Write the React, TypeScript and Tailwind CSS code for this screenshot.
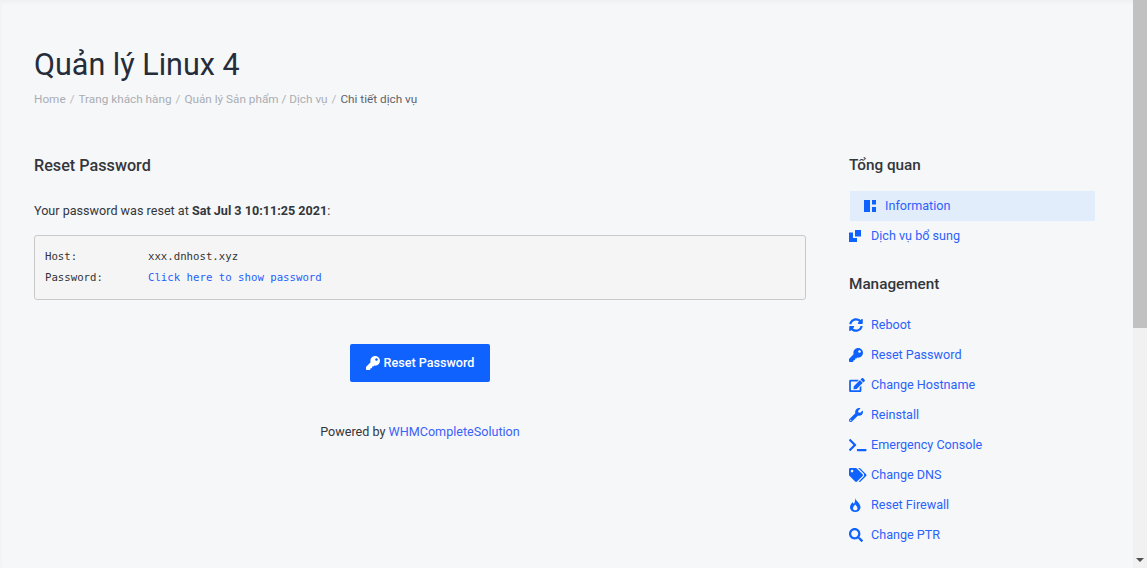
import { FaSyncAlt, FaKey, FaEdit, FaWrench, FaTerminal, FaTags, FaSearch } from 'react-icons/fa';

function FlameIcon({ className }: { className?: string }) {
  return (
    <svg viewBox="0 0 384 512" className={`fill-current ${className}`}>
      <path
        fillRule="evenodd"
        d="M192 0C200 90 300 130 350 230C375 280 384 310 384 340C384 440 300 512 192 512S0 440 0 340C0 260 60 200 100 150C110 200 130 215 150 200C190 150 190 60 192 0ZM192 240C130 310 110 350 110 380C110 420 145 448 192 448S274 420 274 380C274 350 254 310 192 240Z"
      />
    </svg>
  );
}

const MANAGEMENT = [
  { label: 'Reboot', icon: FaSyncAlt, size: 'w-[14px] h-[14px]' },
  { label: 'Reset Password', icon: FaKey, size: 'w-[14px] h-[14px]' },
  { label: 'Change Hostname', icon: FaEdit, size: 'w-[16px] h-[14px]' },
  { label: 'Reinstall', icon: FaWrench, size: 'w-[14px] h-[14px]' },
  { label: 'Emergency Console', icon: FaTerminal, size: 'w-[17.5px] h-[14px]' },
  { label: 'Change DNS', icon: FaTags, size: 'w-[17.5px] h-[14px]' },
  { label: 'Reset Firewall', icon: FlameIcon, size: 'w-[10.5px] h-[14px] ml-[1px]' },
  { label: 'Change PTR', icon: FaSearch, size: 'w-[14px] h-[14px]' },
];

const CRUMBS = ['Home', 'Trang khách hàng', 'Quản lý Sản phẩm / Dịch vụ'];

function InfoIcon() {
  return (
    <svg viewBox="0 0 12 12" className="w-[12px] h-[12px] fill-current">
      <path d="M0 0h6v12H0zM8 0h4v4.5H8zM8 7h4v5H8z" />
    </svg>
  );
}

function AddonIcon() {
  return (
    <svg viewBox="0 0 12 12" className="w-[12px] h-[12px] fill-current">
      <path d="M6 0h6v6.5H6zM0 2.5h4v5.5h4v4H0z" />
    </svg>
  );
}

export default function App() {
  return (
    <div className="flex h-[568px] overflow-hidden bg-[#f6f7f9] font-['Roboto',sans-serif] text-[12.6px] text-[#292b2f]">
      <main className="flex-1 min-w-0 pl-[34px] pr-[38px] pt-[43px] shadow-[inset_0_4px_4px_-2px_#eeeff1,inset_4px_0_4px_-3px_#f0f1f3]">
        <h1 className="text-[30.5px] leading-[44px] text-[#252c3a]">Quản lý Linux 4</h1>
        <nav className="flex items-center mt-[3px] h-[20px] text-[11.75px] text-[#a9adb3]">
          {CRUMBS.map((c) => (
            <span key={c} className="flex">
              {c}
              <span className="mx-[4px] text-[#b5b8bd]">/</span>
            </span>
          ))}
          <span className="text-[#5f6268]">Chi tiết dịch vụ</span>
        </nav>

        <div className="flex mt-[43px]">
          <section className="w-[772px] shrink-0">
            <h2 className="mt-[1px] text-[16.2px] leading-[24px] font-medium text-[#33363b]">Reset Password</h2>
            <p className="mt-[23px] leading-[20px] text-[#33363b]">
              Your password was reset at <b className="font-bold">Sat Jul 3 10:11:25 2021</b>:
            </p>
            <div className="mt-[14px] h-[65px] rounded-[3px] border border-[#c9c9c9] bg-[#f5f5f5] px-[10px] pt-[10px] font-['DejaVu_Sans_Mono',monospace] text-[10.7px] leading-[21px] text-[#333]">
              <div className="flex">
                <span className="w-[103px]">Host:</span>
                <span>xxx.dnhost.xyz</span>
              </div>
              <div className="flex">
                <span className="w-[103px]">Password:</span>
                <a className="text-[#1f5fff]">Click here to show password</a>
              </div>
            </div>
            <div className="flex justify-center mt-[44px]">
              <button className="flex items-center justify-center gap-[4px] w-[140px] h-[38px] rounded-[2px] bg-[#0f62fe] text-white font-medium">
                <FaKey className="w-[14px] h-[14px]" />
                Reset Password
              </button>
            </div>
            <p className="mt-[40px] text-center leading-[20px] text-[#33363b]">
              Powered by <a className="text-[#3b62f6]">WHMCompleteSolution</a>
            </p>
          </section>

          <aside className="ml-[43px] flex-1 min-w-0">
            <h3 className="text-[15.3px] leading-[24px] font-medium text-[#33363b]">Tổng quan</h3>
            <ul className="mt-[14px] ml-[1px] text-[#2b62fb]">
              <li className="flex items-center gap-[9px] h-[30px] pl-[14px] bg-[#e2edfb]">
                <span className="text-[#0f62fe]"><InfoIcon /></span>
                Information
              </li>
              <li className="flex items-center gap-[10px] h-[30px] -ml-[1px]">
                <span className="text-[#0f62fe]"><AddonIcon /></span>
                Dịch vụ bổ sung
              </li>
            </ul>
            <h3 className="mt-[21px] text-[15.3px] leading-[24px] font-medium text-[#33363b]">Management</h3>
            <ul className="mt-[14px] text-[#2b62fb]">
              {MANAGEMENT.map((m) => (
                <li key={m.label} className="flex items-center h-[30px]">
                  <span className="w-[22px] shrink-0 text-[#0f62fe]">
                    <m.icon className={m.size} />
                  </span>
                  {m.label}
                </li>
              ))}
            </ul>
          </aside>
        </div>
      </main>

      <div className="w-[14px] shrink-0 flex flex-col bg-[#f1f1f1]">
        <div className="h-[328px] bg-[#c1c1c1]" />
        <div className="mt-auto h-[17px] flex items-center justify-center">
          <span className="border-x-[4px] border-t-[4px] border-x-transparent border-t-[#505050]" />
        </div>
      </div>
    </div>
  );
}
